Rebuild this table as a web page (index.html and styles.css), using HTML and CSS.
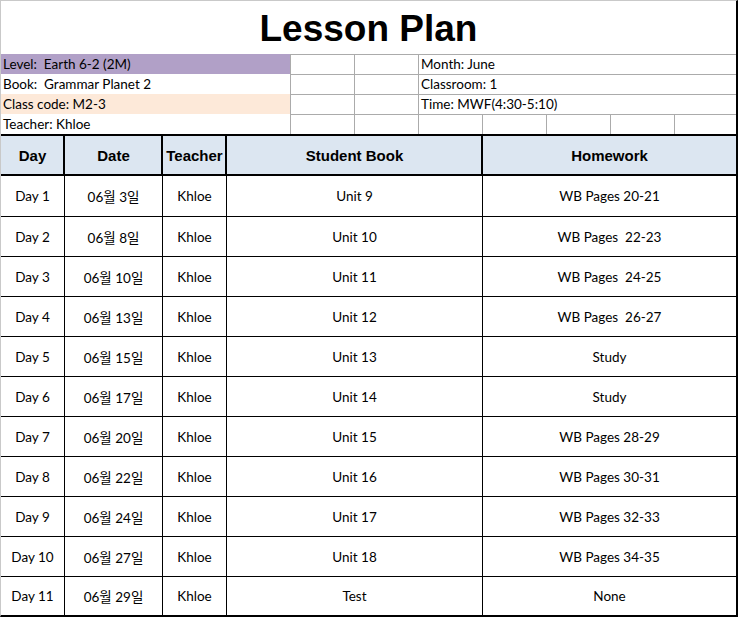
FILE: index.html
```html
<!DOCTYPE html>
<html>
<head>
<meta charset="utf-8">
<title>Lesson Plan</title>
<link rel="stylesheet" href="styles.css">
</head>
<body>
<div class="sheet">
  <div class="title">Lesson Plan</div>
  <div class="info">
    <div class="cell lbl level">Level:  Earth 6-2 (2M)</div>
    <div class="cell g"></div>
    <div class="cell g"></div>
    <div class="cell g wide">Month: June</div>

    <div class="cell lbl">Book:  Grammar Planet 2</div>
    <div class="cell g"></div>
    <div class="cell g"></div>
    <div class="cell g wide">Classroom: 1</div>

    <div class="cell lbl code">Class code: M2-3</div>
    <div class="cell g"></div>
    <div class="cell g"></div>
    <div class="cell g wide">Time: MWF(4:30-5:10)</div>

    <div class="cell lbl">Teacher: Khloe</div>
    <div class="cell g"></div>
    <div class="cell g"></div>
    <div class="cell g"></div>
    <div class="cell g"></div>
    <div class="cell g"></div>
    <div class="cell g"></div>
    <div class="cell g"></div>
  </div>

  <div class="plan">
    <div class="th first">Day</div>
    <div class="th">Date</div>
    <div class="th">Teacher</div>
    <div class="th">Student Book</div>
    <div class="th">Homework</div>

    <div class="td first">Day 1</div><div class="td">06월 3일</div><div class="td">Khloe</div><div class="td">Unit 9</div><div class="td">WB Pages 20-21</div>
    <div class="td first">Day 2</div><div class="td">06월 8일</div><div class="td">Khloe</div><div class="td">Unit 10</div><div class="td">WB Pages  22-23</div>
    <div class="td first">Day 3</div><div class="td">06월 10일</div><div class="td">Khloe</div><div class="td">Unit 11</div><div class="td">WB Pages  24-25</div>
    <div class="td first">Day 4</div><div class="td">06월 13일</div><div class="td">Khloe</div><div class="td">Unit 12</div><div class="td">WB Pages  26-27</div>
    <div class="td first">Day 5</div><div class="td">06월 15일</div><div class="td">Khloe</div><div class="td">Unit 13</div><div class="td">Study</div>
    <div class="td first">Day 6</div><div class="td">06월 17일</div><div class="td">Khloe</div><div class="td">Unit 14</div><div class="td">Study</div>
    <div class="td first">Day 7</div><div class="td">06월 20일</div><div class="td">Khloe</div><div class="td">Unit 15</div><div class="td">WB Pages 28-29</div>
    <div class="td first">Day 8</div><div class="td">06월 22일</div><div class="td">Khloe</div><div class="td">Unit 16</div><div class="td">WB Pages 30-31</div>
    <div class="td first">Day 9</div><div class="td">06월 24일</div><div class="td">Khloe</div><div class="td">Unit 17</div><div class="td">WB Pages 32-33</div>
    <div class="td first">Day 10</div><div class="td">06월 27일</div><div class="td">Khloe</div><div class="td">Unit 18</div><div class="td">WB Pages 34-35</div>
    <div class="td first last">Day 11</div><div class="td last">06월 29일</div><div class="td last">Khloe</div><div class="td last">Test</div><div class="td last">None</div>
  </div>
</div>
</body>
</html>
```

FILE: styles.css
```css
html, body {
  margin: 0;
  padding: 0;
  background: #ffffff;
}

.sheet {
  width: 735px;
  height: 614px;
  border-left: 1px solid #c9c9c9;
  border-top: 1px solid #c9c9c9;
  border-right: 2px solid #000;
  border-bottom: 2px solid #000;
  font-family: Lato, "Noto Sans CJK KR", sans-serif;
  font-size: 13.5px;
  color: #000;
  overflow: hidden;
}

.title {
  height: 50px;
  padding-top: 3px;
  line-height: 50px;
  text-align: center;
  font-family: "Liberation Sans", Arial, sans-serif;
  font-weight: bold;
  font-size: 37px;
  color: #000;
}

.info {
  display: grid;
  grid-template-columns: 289px repeat(6, 64px) 62px;
  grid-auto-rows: 20px;
}

.cell {
  box-sizing: border-box;
  border-top: 1px solid transparent;
  line-height: 19px;
  padding-left: 2px;
  white-space: pre;
  overflow: hidden;
}

.cell.g {
  border-top-color: #ababab;
  border-left: 1px solid #ababab;
}

.cell.wide {
  grid-column: span 5;
}

.level {
  background: #b1a0c7;
}

.code {
  background: #fde9d9;
}

.plan {
  display: grid;
  grid-template-columns: 63px 98px 64px 256px 254px;
  grid-template-rows: 42px 41px repeat(9, 40px) 38px;
}

.th, .td {
  box-sizing: border-box;
  display: flex;
  align-items: center;
  justify-content: center;
  white-space: pre;
  overflow: hidden;
}

.th {
  background: #dce6f1;
  border-top: 2px solid #000;
  border-bottom: 2px solid #000;
  border-left: 2px solid #000;
  margin-left: -1px;
  font-family: "Liberation Sans", Arial, sans-serif;
  font-weight: bold;
  font-size: 15px;
}

.td {
  border-bottom: 1px solid #000;
  border-left: 1px solid #000;
}

.th.first {
  border-left: none;
  margin-left: 0;
}

.td.first {
  border-left: none;
}

.td.last {
  border-bottom: none;
}
```
